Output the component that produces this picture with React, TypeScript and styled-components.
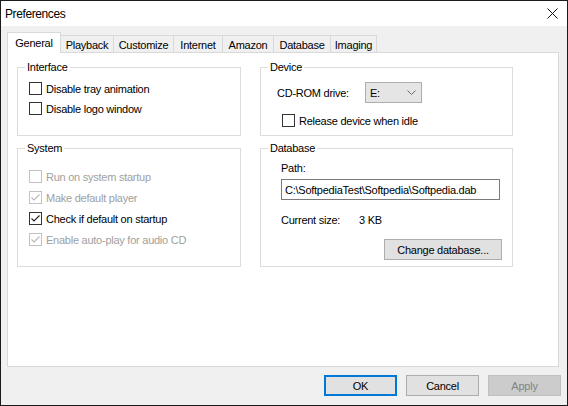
import styled, { createGlobalStyle } from "styled-components";

const Global = createGlobalStyle`
  html, body { margin: 0; padding: 0; background: #fff; }
  body {
    font-family: "Liberation Sans", Arial, sans-serif;
    font-size: 11px;
    letter-spacing: -0.25px;
    color: #000;
  }
`;

const Window = styled.div`
  width: 568px;
  height: 406px;
  box-sizing: border-box;
  border: 1px solid #1b1b1b;
  display: flex;
  flex-direction: column;
  background: #f0f0f0;
`;

const TitleBar = styled.div`
  height: 25px;
  background: #fff;
  display: flex;
  align-items: center;
  justify-content: space-between;
  padding: 0 9px 0 4px;
`;

const Title = styled.span`
  font-size: 12px;
  letter-spacing: -0.4px;
`;

const Body = styled.div`
  flex: 1;
  display: flex;
  flex-direction: column;
  padding: 7px 6px 8px 6px;
`;

const TabStrip = styled.div`
  display: flex;
  align-items: flex-end;
  height: 20px;
  margin-bottom: -1px;
  position: relative;
  z-index: 1;
`;

const Tab = styled.div<{ $w: number; $active?: boolean }>`
  box-sizing: border-box;
  width: ${(p) => p.$w}px;
  height: ${(p) => (p.$active ? 21 : 18)}px;
  display: flex;
  align-items: center;
  justify-content: center;
  padding-top: ${(p) => (p.$active ? 0 : 1)}px;
  background: ${(p) => (p.$active ? "#fff" : "#f0f0f0")};
  border-top: 1px solid #d9d9d9;
  border-right: 1px solid #d9d9d9;
  border-left: ${(p) => (p.$active ? "1px solid #d9d9d9" : "none")};
  border-bottom: ${(p) => (p.$active ? "none" : "1px solid #d9d9d9")};
`;

const Panel = styled.div`
  width: 552px;
  height: 315px;
  box-sizing: border-box;
  background: #fff;
  border: 1px solid #d9d9d9;
  display: grid;
  grid-template-columns: 224px 253px;
  grid-template-rows: 69px 119px;
  column-gap: 19px;
  row-gap: 12px;
  padding: 14px 0 0 9px;
  align-content: start;
`;

const Group = styled.div<{ $pl: number; $gap: number }>`
  box-sizing: border-box;
  border: 1px solid #dcdcdc;
  display: flex;
  flex-direction: column;
  align-items: flex-start;
  gap: ${(p) => p.$gap}px;
  padding: 0 0 0 ${(p) => p.$pl}px;
`;

const Legend = styled.div<{ $pb: number; $pl: number }>`
  width: fit-content;
  margin: -8px 0 ${(p) => p.$pb}px ${(p) => 7 - p.$pl}px;
  padding: 0 2px;
  line-height: 15px;
  background: #fff;
`;

const CheckRow = styled.label<{ $disabled?: boolean; $mt?: number; $ml?: number }>`
  display: flex;
  align-items: center;
  gap: 4px;
  height: 13px;
  margin-top: ${(p) => p.$mt ?? 0}px;
  margin-left: ${(p) => p.$ml ?? 0}px;
  white-space: nowrap;
  color: ${(p) => (p.$disabled ? "#a0a0a0" : "#000")};
`;

const Box = styled.span<{ $disabled?: boolean }>`
  box-sizing: border-box;
  width: 13px;
  height: 13px;
  flex: none;
  background: #fff;
  border: 1px solid ${(p) => (p.$disabled ? "#c2c2c2" : "#333")};
  display: flex;
  align-items: center;
  justify-content: center;
`;

const FieldRow = styled.div<{ $h: number; $mt?: number }>`
  display: flex;
  align-items: center;
  height: ${(p) => p.$h}px;
  margin-top: ${(p) => p.$mt ?? 0}px;
`;

const FieldLabel = styled.span<{ $w: number }>`
  width: ${(p) => p.$w}px;
  flex: none;
  white-space: nowrap;
`;

const Combo = styled.div`
  box-sizing: border-box;
  width: 57px;
  height: 21px;
  background: #e5e5e5;
  border: 1px solid #adadad;
  display: flex;
  align-items: center;
  justify-content: space-between;
  padding: 0 5px 0 4px;
`;

const TextLine = styled.div`
  line-height: 15px;
  white-space: nowrap;
`;

const Input = styled.div<{ $mt: number }>`
  box-sizing: border-box;
  width: 219px;
  height: 21px;
  margin-top: ${(p) => p.$mt}px;
  border: 1px solid #7a7a7a;
  background: #fff;
  display: flex;
  align-items: center;
  padding-left: 3px;
  white-space: nowrap;
`;

const Button = styled.button<{ $w: number; $primary?: boolean; $mt?: number; $ml?: number }>`
  box-sizing: border-box;
  width: ${(p) => p.$w}px;
  height: 21px;
  margin: ${(p) => p.$mt ?? 0}px 0 0 ${(p) => p.$ml ?? 0}px;
  padding: 0;
  font: inherit;
  letter-spacing: inherit;
  color: ${(p) => (p.disabled ? "#838383" : "#000")};
  background: ${(p) => (p.disabled ? "#cccccc" : "#e1e1e1")};
  border: ${(p) =>
    p.$primary ? "2px solid #0078d7" : p.disabled ? "1px solid #bfbfbf" : "1px solid #adadad"};
`;

const Footer = styled.div`
  display: flex;
  justify-content: flex-end;
  gap: 9px;
  margin-top: 8px;
`;

function Check({ checked, disabled }: { checked?: boolean; disabled?: boolean }) {
  return (
    <Box $disabled={disabled}>
      {checked && (
        <svg width="11" height="11" viewBox="0 0 11 11">
          <path
            d="M1.5 5.5 L4 8 L9.5 2.5"
            fill="none"
            stroke={disabled ? "#b8b8b8" : "#222"}
            strokeWidth="1.1"
          />
        </svg>
      )}
    </Box>
  );
}

const tabs: [string, number][] = [
  ["General", 54],
  ["Playback", 53],
  ["Customize", 60],
  ["Internet", 49],
  ["Amazon", 51],
  ["Database", 57],
  ["Imaging", 46],
];

export default function App() {
  return (
    <>
      <Global />
      <Window>
        <TitleBar>
          <Title>Preferences</Title>
          <svg width="11" height="11" viewBox="0 0 11 11">
            <path d="M0.5 0.5 L10.5 10.5 M10.5 0.5 L0.5 10.5" stroke="#111" strokeWidth="1" />
          </svg>
        </TitleBar>
        <Body>
          <TabStrip>
            {tabs.map(([t, w], i) => (
              <Tab key={t} $w={w} $active={i === 0}>
                {t}
              </Tab>
            ))}
          </TabStrip>
          <Panel>
            <Group $pl={11} $gap={7}>
              <Legend $pb={0} $pl={11}>Interface</Legend>
              <CheckRow>
                <Check />
                Disable tray animation
              </CheckRow>
              <CheckRow>
                <Check />
                Disable logo window
              </CheckRow>
            </Group>
            <Group $pl={16} $gap={0}>
              <Legend $pb={7} $pl={16}>Device</Legend>
              <FieldRow $h={21}>
                <FieldLabel $w={88}>CD-ROM drive:</FieldLabel>
                <Combo>
                  <span>E:</span>
                  <svg width="9" height="6" viewBox="0 0 9 6">
                    <path d="M0.5 0.5 L4.5 4.5 L8.5 0.5" fill="none" stroke="#666" strokeWidth="1" />
                  </svg>
                </Combo>
              </FieldRow>
              <CheckRow $mt={11} $ml={5}>
                <Check />
                Release device when idle
              </CheckRow>
            </Group>
            <Group $pl={11} $gap={8}>
              <Legend $pb={6} $pl={11}>System</Legend>
              <CheckRow $disabled>
                <Check disabled />
                Run on system startup
              </CheckRow>
              <CheckRow $disabled>
                <Check checked disabled />
                Make default player
              </CheckRow>
              <CheckRow>
                <Check checked />
                Check if default on startup
              </CheckRow>
              <CheckRow $disabled>
                <Check checked disabled />
                Enable auto-play for audio CD
              </CheckRow>
            </Group>
            <Group $pl={20} $gap={0}>
              <Legend $pb={5} $pl={20}>Database</Legend>
              <TextLine>Path:</TextLine>
              <Input $mt={3}>C:\SoftpediaTest\Softpedia\Softpedia.dab</Input>
              <FieldRow $h={15} $mt={12}>
                <FieldLabel $w={78}>Current size:</FieldLabel>
                <span>3 KB</span>
              </FieldRow>
              <Button $w={118} $mt={12} $ml={103}>
                Change database...
              </Button>
            </Group>
          </Panel>
          <Footer>
            <Button $w={73} $primary>
              OK
            </Button>
            <Button $w={73}>Cancel</Button>
            <Button $w={73} disabled>
              Apply
            </Button>
          </Footer>
        </Body>
      </Window>
    </>
  );
}
